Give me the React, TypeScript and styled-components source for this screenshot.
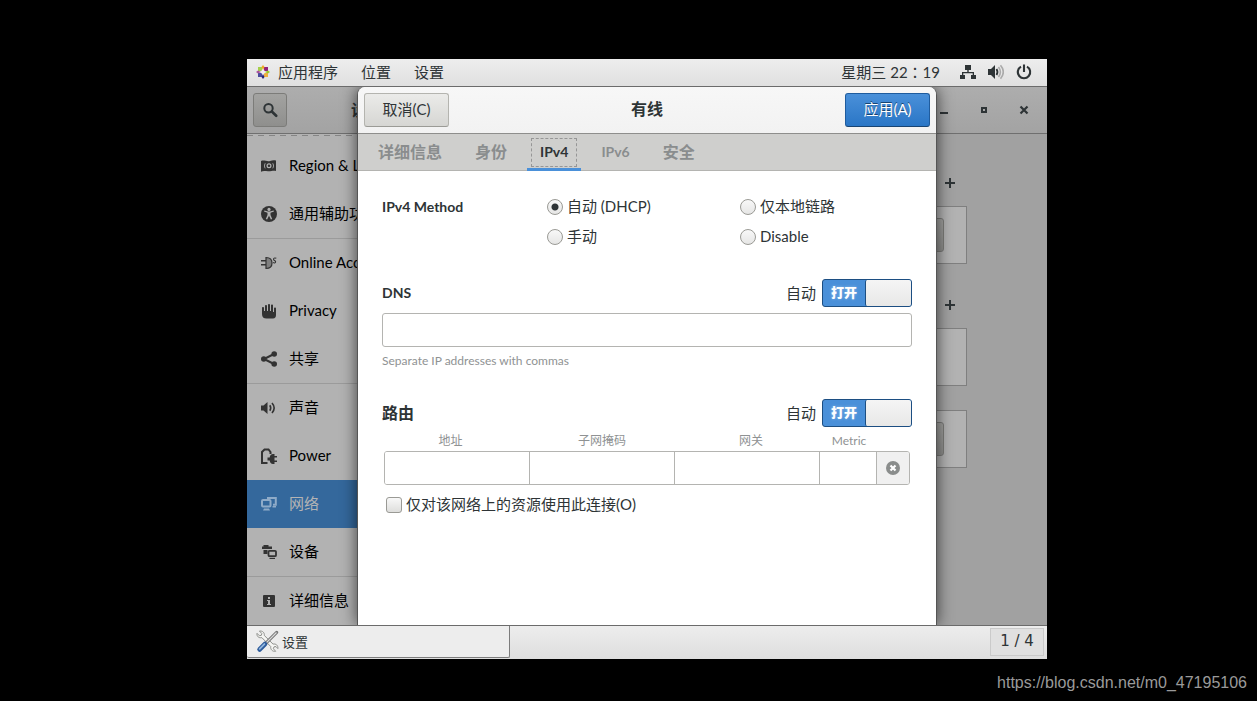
import React from 'react';
import styled, { createGlobalStyle, css } from 'styled-components';

const GlobalStyle = createGlobalStyle`
  * { box-sizing: border-box; }
  body {
    margin: 0;
    background: #000;
    color: #2e3436;
    font-family: Lato, "Noto Sans CJK SC", sans-serif;
    font-size: 15px;
    line-height: 20px;
  }
  button, input { font: inherit; color: inherit; margin: 0; }
`;

/* ---------- page ---------- */

const Page = styled.div`
  min-height: 100vh;
  display: flex;
  flex-direction: column;
  padding-top: 59px;
`;

const Desktop = styled.div`
  flex: 1;
  display: flex;
  flex-direction: column;
  margin: 0 210px 0 247px;
  background: #ededed;
`;

const Footer = styled.footer`
  height: 42px;
  padding: 14px 10px 0;
  text-align: right;
  color: #9a9a9a;
  font-family: "Liberation Sans", sans-serif;
  font-size: 16px;
`;

/* ---------- panels ---------- */

const TopPanel = styled.header`
  display: flex;
  align-items: center;
  height: 28px;
  padding: 0 15px 2px 9px;
  border-bottom: 1px solid #6b6b6b;
  background: linear-gradient(#ededed, #e0e0e0);
`;

const PanelMenu = styled.nav`
  display: flex;
  align-items: center;
  flex: 1;
  gap: 23px;
`;

const PanelItem = styled.button`
  display: flex;
  align-items: center;
  gap: 8px;
  padding: 0;
  border: 0;
  background: none;
  white-space: nowrap;
`;

const Clock = styled(PanelItem)`
  font-family: Lato, "Noto Sans CJK TC", sans-serif;
`;

const Tray = styled.div`
  display: flex;
  align-items: center;
  gap: 12px;
  margin-left: 20px;
`;

const BottomPanel = styled.footer`
  display: flex;
  align-items: flex-start;
  justify-content: space-between;
  height: 34px;
  padding-right: 3px;
  border-top: 1px solid #6b6b6b;
  background: linear-gradient(#ededed, #dedede);
`;

const TaskButton = styled.button`
  display: flex;
  align-items: center;
  gap: 3px;
  width: 263px;
  height: 32px;
  padding: 0 9px;
  border: 0;
  border-right: 1px solid #7c7c7c;
  border-bottom: 1px solid #7c7c7c;
  border-radius: 0 0 2px 2px;
  background: #ededed;
  font-size: 13px;
`;

const Pager = styled.button`
  width: 54px;
  height: 28px;
  margin-top: 2px;
  padding: 0 0 2px;
  border: 1px solid #cacaca;
  background: #e0e0e0;
  font-family: "DejaVu Sans", sans-serif;
  font-size: 15px;
`;

/* ---------- settings window ---------- */

const WorkArea = styled.main`
  position: relative;
  flex: 1;
  display: flex;
  flex-direction: column;
  overflow: hidden;
  background: #a1a1a1;
`;

const WindowBar = styled.div`
  display: flex;
  align-items: center;
  height: 47px;
  padding: 0 6px;
  border-bottom: 1px solid #6f6f6f;
  background: linear-gradient(#adadad, #a3a3a3);
`;

const WindowTitle = styled.h1`
  width: 160px;
  margin: 0;
  text-align: center;
  font-size: 16px;
  font-weight: 700;
`;

const WindowControls = styled.div`
  display: flex;
  gap: 6px;
  margin-left: auto;
`;

const buttonFace = css`
  border: 1px solid #b4b4af;
  border-bottom-color: #9b9b96;
  border-radius: 3px;
  background: linear-gradient(#ebebe9, #d6d6d3);
`;

const IconButton = styled.button<{ $raised?: boolean }>`
  display: flex;
  align-items: center;
  justify-content: center;
  width: 34px;
  height: 34px;
  padding: 0;
  border: 1px solid transparent;
  background: none;
  ${p => p.$raised && css`
    border-color: #7c7c79;
    border-radius: 3px;
    background: linear-gradient(#a3a3a1, #8f8f8d);
  `}
`;

const WindowBody = styled.div`
  flex: 1;
  display: flex;
`;

const Sidebar = styled.nav`
  width: 120px;
  border-right: 1px solid #7f7f7f;
  background: #b2b2b2;
`;

const ScrollEdge = styled.div`
  height: 8px;
  padding-top: 1px;

  &::before {
    content: "";
    display: block;
    height: 1px;
    background: repeating-linear-gradient(90deg, #858585 0 6px, transparent 6px 11px);
  }
`;

const SideList = styled.ul`
  margin: 0;
  padding: 0;
  list-style: none;

  & + & { border-top: 1px solid #9b9b9b; }
`;

const SideLink = styled.a<{ $active?: boolean }>`
  display: flex;
  align-items: center;
  gap: 12px;
  height: 48px;
  padding-left: 14px;
  color: ${p => (p.$active ? '#b4b4b4' : '#000')};
  background: ${p => (p.$active ? '#34689c' : 'transparent')};
  text-decoration: none;
  white-space: nowrap;

  svg { flex-shrink: 0; color: ${p => (p.$active ? '#8fabc8' : '#333')}; }
`;

const SideName = styled.span`
  padding-bottom: 2px;
`;

const Panel = styled.section`
  flex: 1;
  padding: 32px 80px 0;
`;

const PanelHead = styled.div`
  display: flex;
  justify-content: flex-end;
  margin-bottom: 6px;
`;

const Card = styled.div`
  display: flex;
  align-items: center;
  justify-content: flex-end;
  height: 58px;
  margin-bottom: 24px;
  padding-right: 22px;
  border: 1px solid #7f7f7f;
  background: #b2b2b2;
`;

/* ---------- dialog ---------- */

const Dialog = styled.form`
  position: absolute;
  inset: 0 110px;
  display: flex;
  flex-direction: column;
  border: 1px solid #555;
  border-width: 0 1px;
  border-radius: 8px 8px 0 0;
  background: #fff;
  box-shadow: 0 0 16px rgba(0, 0, 0, 0.65);
  overflow: hidden;
`;

const DialogBar = styled.div`
  display: flex;
  align-items: center;
  justify-content: space-between;
  height: 47px;
  padding: 0 6px;
  border-bottom: 1px solid #8e8e8c;
  background: linear-gradient(#f7f7f7, #f2f2f2);
`;

const DialogTitle = styled.h2`
  margin: 0;
  padding-bottom: 2px;
  font-size: 16px;
  font-weight: 700;
`;

const Action = styled.button<{ $primary?: boolean }>`
  width: 85px;
  height: 34px;
  padding: 0 0 2px;
  ${buttonFace}
  ${p => p.$primary && css`
    border-color: #1f5c9e #1f5c9e #184472;
    background: linear-gradient(#4a90d9, #2a76c6);
    color: #fff;
    text-shadow: 0 -1px #184472;
  `}
`;

const Tabs = styled.div`
  display: flex;
  gap: 7px;
  height: 37px;
  padding: 0 7px;
  border-bottom: 1px solid #b4b4b1;
  background: #cfcfcd;
`;

const Tab = styled.button<{ $latin?: boolean }>`
  height: 37px;
  padding: 4px 4px 2px;
  border: 0;
  border-bottom: 3px solid transparent;
  background: none;
  color: #8a8d8e;
  font-size: ${p => (p.$latin ? 14 : 16)}px;
  font-weight: 700;
  white-space: nowrap;

  span {
    display: block;
    padding: 3px 8px 4px;
    border: 1px dashed transparent;
  }

  &[aria-selected="true"] {
    border-bottom-color: #4a90d9;
    color: #2e3436;
  }
  &[aria-selected="true"] span { border-color: #969696; }
`;

const TabPage = styled.div`
  flex: 1;
  padding: 21px 24px 0;
`;

const MethodGroup = styled.div`
  display: grid;
  grid-template-columns: 165fr 193fr 172fr;
  grid-auto-rows: 30px;
  align-items: center;
`;

const Heading = styled.h3<{ $latin?: boolean }>`
  margin: 0;
  font-size: ${p => (p.$latin ? 14 : 16)}px;
  font-weight: 700;
`;

const Choice = styled.label<{ $column?: number }>`
  display: flex;
  align-items: center;
  gap: 4px;
  grid-column: ${p => p.$column ?? 'auto'};
  white-space: nowrap;

  span { padding-bottom: 2px; }
`;

const Radio = styled.input.attrs({ type: 'radio' })`
  appearance: none;
  width: 16px;
  height: 16px;
  border: 1px solid #9a9a95;
  border-radius: 50%;
  background: linear-gradient(#f8f8f8, #e6e6e5);

  &:checked {
    background:
      radial-gradient(circle, #2e3436 0 3px, transparent 4px),
      linear-gradient(#f8f8f8, #e6e6e5);
  }
`;

const Check = styled.input.attrs({ type: 'checkbox' })`
  appearance: none;
  width: 16px;
  height: 16px;
  border: 1px solid #9a9a95;
  border-radius: 3px;
  background: linear-gradient(#f8f8f8, #dededc);
`;

const SectionHead = styled.div`
  display: flex;
  align-items: center;
  justify-content: space-between;
  height: 28px;
`;

const SwitchLabel = styled.label`
  display: flex;
  align-items: center;
  gap: 6px;
`;

const SwitchInput = styled.input.attrs({ type: 'checkbox', role: 'switch' })`
  position: absolute;
  opacity: 0;
`;

const SwitchTrack = styled.span`
  display: flex;
  width: 90px;
  height: 28px;
  border: 1px solid #1c4e82;
  border-radius: 3px;
  background: #4a90d9;
  color: #fff;
  font-size: 13px;
  font-weight: 900;
  line-height: 25px;
  text-align: center;
  text-shadow: 0 0 3px rgba(255, 255, 255, 0.4);

  span { flex: 1; }

  &::after {
    content: "";
    width: 45px;
    border-left: 1px solid #1c4e82;
    border-radius: 2px;
    background: linear-gradient(#f5f5f5, #e8e8e7);
  }
`;

const Section = styled.section<{ $gap: number }>`
  margin-top: ${p => p.$gap}px;
`;

const TextBox = styled.input`
  display: block;
  width: 100%;
  height: 34px;
  margin-top: 6px;
  padding: 0 8px;
  border: 1px solid #b4b4b1;
  border-radius: 3px;
  background: #fff;
`;

const Hint = styled.p`
  margin: 4px 0 0;
  color: #8f9293;
  font-size: 12px;
`;

const RouteLabels = styled.div`
  display: grid;
  grid-template-columns: 133fr 170fr 128fr 68fr 27fr;
  margin: 4px 2px 0;
  color: #8f9293;
  font-size: 12px;
  text-align: center;
`;

const RouteRow = styled.div`
  display: grid;
  grid-template-columns: 145fr 145fr 145fr 57fr 32px;
  height: 34px;
  margin: 0 2px;
  border: 1px solid #b4b4b1;
  border-radius: 3px;
  overflow: hidden;
`;

const RouteCell = styled.input`
  min-width: 0;
  padding: 0 8px;
  border: 0;
  border-right: 1px solid #b4b4b1;
  background: #fff;
`;

const RemoveButton = styled.button`
  display: flex;
  align-items: center;
  justify-content: center;
  padding: 0;
  border: 0;
  background: #f0f0f0;
`;

const OnlyLocal = styled.div`
  margin: 9px 4px 0;
`;

/* ---------- icons ---------- */

const Icon = ({ children }: { children: React.ReactNode }) => (
  <svg width="16" height="16" viewBox="0 0 16 16" fill="currentColor" aria-hidden="true">
    {children}
  </svg>
);

const icons = {
  region: (
    <Icon>
      <path fillRule="evenodd" d="M0 3C3 1.500 6 4 9 3C11.500 2 13 2 15 2.500V13c-3-.8-5 .6-8 .3-2.500-.3-5-.8-7 .4zM8 5.300a2.500 2.500 0 1 0 0 5 2.500 2.500 0 0 0 0-5zm0 1.200a1.300 1.300 0 1 1 0 2.600 1.300 1.300 0 0 1 0-2.600zM4 5C2.800 7 2.800 8.800 4 10.600l.6-.4C3.700 8.600 3.700 7 4.600 5.500zM12 5l-.6.500c.9 1.500.9 3.100 0 4.700l.6.400C13.200 8.800 13.200 7 12 5z" />
    </Icon>
  ),
  access: (
    <Icon>
      <circle cx="8" cy="8" r="8" />
      <g fill="#b2b2b2">
        <circle cx="8" cy="3.400" r="1.600" />
        <path d="M3 5.600l3.500 1.200V9L4.800 13l1.300.6L8 9.800l1.900 3.800 1.300-.6L9.500 9V6.800L13 5.600l-.4-1.100L9 5.500H7L3.400 4.500z" />
      </g>
    </Icon>
  ),
  online: (
    <Icon>
      <path d="M0 5h5v1.500H0zM0 9h5v1.500H0z" />
      <path d="M5 2.500c4 0 6 2.200 6 5.500s-2 5.500-6 5.500z" fillOpacity=".4" stroke="currentColor" strokeWidth="1.200" />
      <path d="M15.300 3.300c-1.700-.8-3-.1-2.700 1.300.3 1 2 .9 2 2.200 0 1.200-1.300 1.500-2.600.8" fill="none" stroke="currentColor" strokeWidth="1.100" />
    </Icon>
  ),
  privacy: (
    <Icon>
      <path d="M1 7V5c0-1.300 2-1.300 2 0v3h1V3c0-1.300 2-1.300 2 0v5h1V2c0-1.300 2-1.300 2 0v6h1V2.500c0-1.300 2-1.300 2 0V9h1V5.500c0-1.300 2-1.300 2 0V12c0 2-1 3.500-3 3.500H5.500C2.500 15.500 1 14 1 11z" />
    </Icon>
  ),
  share: (
    <Icon>
      <circle cx="2.800" cy="8" r="2.800" />
      <circle cx="13.200" cy="3" r="2.800" />
      <circle cx="13.200" cy="13" r="2.800" />
      <path d="M13 3L3 8l10 5" fill="none" stroke="currentColor" strokeWidth="2" />
    </Icon>
  ),
  sound: (
    <Icon>
      <path d="M0 5.500h2.500L6.500 2v12l-4-3.500H0z" />
      <path d="M8.800 5.300c1.200 1.800 1.200 3.600 0 5.400" fill="none" stroke="currentColor" strokeWidth="1.600" />
      <path d="M11 3c2.600 3 2.600 7 0 10" fill="none" stroke="currentColor" strokeWidth="1.600" />
    </Icon>
  ),
  power: (
    <Icon>
      <path d="M6.500 15H1V4L3.500 1.500h4L9.500 4v2" fill="none" stroke="currentColor" strokeWidth="2" />
      <path d="M13.500 6v2H16v1.500h-2.500v3H16V14h-2.500v2H12c-2 0-3-1.500-3.300-3.500H6.500v-3h2.200C9 7.500 10 6 12 6z" />
    </Icon>
  ),
  network: (
    <Icon>
      <rect x="1" y="4" width="8.500" height="6.500" rx="1" fill="none" stroke="currentColor" strokeWidth="2" />
      <path d="M3 12.500h5l1 2H2z" />
      <path d="M7 3V2h7.800v6.800H12" fill="none" stroke="currentColor" strokeWidth="2" />
      <path d="M11.500 10H15v1.500h-3.500z" />
    </Icon>
  ),
  devices: (
    <Icon>
      <path d="M2.500 1h5v1.500H11V5H1V2.500h1.500zM2.500 6h4v4h-4z" />
      <rect x="7.500" y="6.800" width="7.500" height="5.400" rx="1" fill="#b2b2b2" stroke="currentColor" strokeWidth="1.800" />
      <path d="M8.500 13.800h5.500V15H8.500z" />
    </Icon>
  ),
  info: (
    <Icon>
      <path fillRule="evenodd" d="M3 2h10a1 1 0 0 1 1 1v10a1 1 0 0 1-1 1H3a1 1 0 0 1-1-1V3a1 1 0 0 1 1-1zM7 4v2h2V4zM6 7v1h1v3H6v1h4v-1H9V7z" />
    </Icon>
  ),
};

const DistroLogo = () => (
  <svg width="14" height="14" viewBox="0 0 14 14" aria-hidden="true">
    <path d="M2 2h4v4H2z" fill="#a5cf4a" />
    <path d="M8 2h4v4H8z" fill="#932279" />
    <path d="M8 8h4v4H8z" fill="#efb040" />
    <path d="M2 8h4v4H2z" fill="#4a4a9c" />
    <path d="M7 0l1.500 2L7 5 5.500 2z" fill="#efa724" />
    <path d="M7 14l1.500-2L7 9l-1.500 3z" fill="#262577" />
    <path d="M0 7l2-1.500L5 7 2 8.500z" fill="#a8549a" />
    <path d="M14 7l-2-1.500L9 7l3 1.500z" fill="#9ccd2a" />
    <circle cx="7" cy="7" r="2" fill="#f4eef2" />
  </svg>
);

const ToolsIcon = () => (
  <svg width="23" height="23" viewBox="0 0 22 22" aria-hidden="true">
    <path
      d="M1 3.200C.4 6 2.800 8 5.600 7.300l8.500 8.500c-.4 2.800 1.600 5 4.700 4.600l-2.200-2.500.6-1.800 1.900-.3 1.800 2c.5-3-1.900-4.900-4.600-4.300L7.900 5.200C8.300 2.600 6.300.6 3.300 1l2.300 2.400-.5 1.700-1.900.4z"
      fill="#f6f6f4" stroke="#888a85" strokeWidth=".9" strokeLinejoin="round"
    />
    <path d="M19.800 2.200L10 12" stroke="#777" strokeWidth="3" strokeLinecap="round" />
    <path d="M19.600 2.400L10 12" stroke="#ddd" strokeWidth="1.100" />
    <path d="M8.500 13.500L3.500 18.500" stroke="#2c5a9a" strokeWidth="4.600" strokeLinecap="round" />
    <path d="M8 13.500L3.500 18" stroke="#8fb4de" strokeWidth="1.800" strokeLinecap="round" />
  </svg>
);

const WiredIcon = () => (
  <Icon>
    <path d="M5 1h6v5H8.700v2H14v3h2v4h-5v-4h1.700V9.300H3.300V11H5v4H0v-4h2V8h5.300V6H5z" />
  </Icon>
);

const VolumeIcon = () => (
  <Icon>
    <path d="M0 5h3l4-4v14l-4-4H0z" />
    <path d="M8.500 5c1.300 2 1.300 4 0 6" fill="none" stroke="currentColor" strokeWidth="1.800" />
    <path d="M10.500 3c2.500 3.300 2.500 6.700 0 10M12.500 1.300c3.500 4.200 3.500 9.200 0 13.400" fill="none" stroke="#aaa" strokeWidth="1.600" />
  </Icon>
);

const PowerIcon = () => (
  <Icon>
    <path d="M5 2.600a6.200 6.200 0 1 0 6 0M8 .5V8" fill="none" stroke="currentColor" strokeWidth="2.100" />
  </Icon>
);

const SearchIcon = () => (
  <Icon>
    <circle cx="6.500" cy="6.300" r="4.200" fill="none" stroke="currentColor" strokeWidth="2" />
    <path d="M9.800 9.500l4.400 4.300" stroke="currentColor" strokeWidth="2.600" strokeLinecap="round" />
  </Icon>
);

const PlusIcon = () => (
  <Icon>
    <path d="M3 7h4V3h2v4h4v2H9v4H7V9H3z" />
  </Icon>
);

/* ---------- data ---------- */

const sideGroups: { icon: keyof typeof icons; name: string; active?: boolean }[][] = [
  [
    { icon: 'region', name: 'Region & L' },
    { icon: 'access', name: '通用辅助功' },
  ],
  [
    { icon: 'online', name: 'Online Acc' },
    { icon: 'privacy', name: 'Privacy' },
    { icon: 'share', name: '共享' },
  ],
  [
    { icon: 'sound', name: '声音' },
    { icon: 'power', name: 'Power' },
    { icon: 'network', name: '网络', active: true },
    { icon: 'devices', name: '设备' },
  ],
  [{ icon: 'info', name: '详细信息' }],
];

const tabs = ['详细信息', '身份', 'IPv4', 'IPv6', '安全'];

const routeFields = [
  { id: 'route-address', name: '地址' },
  { id: 'route-netmask', name: '子网掩码' },
  { id: 'route-gateway', name: '网关' },
  { id: 'route-metric', name: 'Metric' },
];

/* ---------- parts ---------- */

const AutoSwitch = () => (
  <SwitchLabel>
    自动
    <SwitchInput defaultChecked />
    <SwitchTrack><span>打开</span></SwitchTrack>
  </SwitchLabel>
);

const SettingsWindow = () => (
  <>
    <WindowBar>
      <IconButton $raised aria-label="搜索"><SearchIcon /></IconButton>
      <WindowTitle>设置</WindowTitle>
      <WindowControls>
        <IconButton aria-label="最小化">
          <Icon><path d="M4 10h8v2H4z" /></Icon>
        </IconButton>
        <IconButton aria-label="最大化">
          <Icon><path fillRule="evenodd" d="M5 5h6v6H5zm2 2v2h2V7z" /></Icon>
        </IconButton>
        <IconButton aria-label="关闭">
          <Icon><path d="M4.500 4.500l7 7m0-7l-7 7" stroke="currentColor" strokeWidth="2.200" /></Icon>
        </IconButton>
      </WindowControls>
    </WindowBar>
    <WindowBody>
      <Sidebar>
        <ScrollEdge />
        {sideGroups.map((group, i) => (
          <SideList key={i}>
            {group.map(item => (
              <li key={item.name}>
                <SideLink href="#" $active={item.active}>
                  {icons[item.icon]}
                  <SideName>{item.name}</SideName>
                </SideLink>
              </li>
            ))}
          </SideList>
        ))}
      </Sidebar>
      <Panel>
        <PanelHead><IconButton aria-label="添加连接"><PlusIcon /></IconButton></PanelHead>
        <Card><IconButton $raised aria-label="连接选项" /></Card>
        <PanelHead><IconButton aria-label="添加 VPN"><PlusIcon /></IconButton></PanelHead>
        <Card />
        <Card><IconButton $raised aria-label="代理选项" /></Card>
      </Panel>
    </WindowBody>
  </>
);

const ConnectionDialog = () => (
  <Dialog>
    <DialogBar>
      <Action type="button">取消(C)</Action>
      <DialogTitle>有线</DialogTitle>
      <Action type="button" $primary>应用(A)</Action>
    </DialogBar>
    <Tabs role="tablist">
      {tabs.map(name => (
        <Tab key={name} type="button" role="tab" aria-selected={name === 'IPv4'} $latin={name.startsWith('IP')}>
          <span>{name}</span>
        </Tab>
      ))}
    </Tabs>
    <TabPage>
      <MethodGroup role="radiogroup" aria-label="IPv4 Method">
        <Heading $latin>IPv4 Method</Heading>
        <Choice $column={2}><Radio name="method" defaultChecked /><span>自动 (DHCP)</span></Choice>
        <Choice $column={3}><Radio name="method" /><span>仅本地链路</span></Choice>
        <Choice $column={2}><Radio name="method" /><span>手动</span></Choice>
        <Choice $column={3}><Radio name="method" /><span>Disable</span></Choice>
      </MethodGroup>
      <Section $gap={27}>
        <SectionHead>
          <Heading $latin>DNS</Heading>
          <AutoSwitch />
        </SectionHead>
        <TextBox aria-label="DNS" />
        <Hint>Separate IP addresses with commas</Hint>
      </Section>
      <Section $gap={28}>
        <SectionHead>
          <Heading>路由</Heading>
          <AutoSwitch />
        </SectionHead>
        <RouteLabels>
          {routeFields.map(f => <label key={f.id} htmlFor={f.id}>{f.name}</label>)}
        </RouteLabels>
        <RouteRow>
          {routeFields.map(f => <RouteCell key={f.id} id={f.id} />)}
          <RemoveButton type="button" aria-label="删除路由">
            <svg width="14" height="14" viewBox="0 0 14 14" aria-hidden="true">
              <circle cx="7" cy="7" r="7" fill="#8a8d8c" />
              <path d="M4.500 4.500l5 5m0-5l-5 5" stroke="#fff" strokeWidth="2.200" />
            </svg>
          </RemoveButton>
        </RouteRow>
        <OnlyLocal>
          <Choice><Check /><span>仅对该网络上的资源使用此连接(O)</span></Choice>
        </OnlyLocal>
      </Section>
    </TabPage>
  </Dialog>
);

export default function App() {
  return (
    <Page>
      <GlobalStyle />
      <Desktop>
        <TopPanel>
          <PanelMenu>
            <PanelItem><DistroLogo />应用程序</PanelItem>
            <PanelItem>位置</PanelItem>
            <PanelItem>设置</PanelItem>
          </PanelMenu>
          <Clock>星期三 22：19</Clock>
          <Tray>
            <WiredIcon />
            <VolumeIcon />
            <PowerIcon />
          </Tray>
        </TopPanel>
        <WorkArea>
          <SettingsWindow />
          <ConnectionDialog />
        </WorkArea>
        <BottomPanel>
          <TaskButton><ToolsIcon />设置</TaskButton>
          <Pager>1 / 4</Pager>
        </BottomPanel>
      </Desktop>
      <Footer>https://blog.csdn.net/m0_47195106</Footer>
    </Page>
  );
}
